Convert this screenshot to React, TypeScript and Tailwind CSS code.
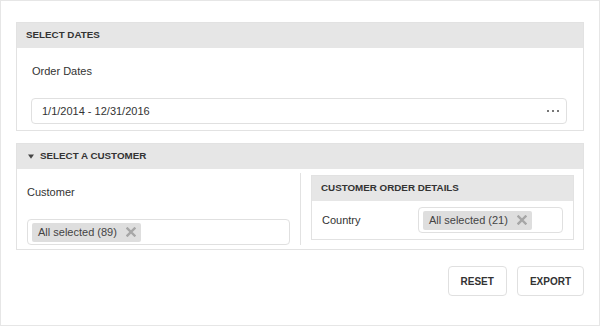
import React from "react";

const font = { fontFamily: '"Liberation Sans", Arial, sans-serif' };

const RemoveIcon = () => (
   <svg width="10" height="10" viewBox="0 0 10 10" className="shrink-0">
      <path d="M1.5 1.5 L8.5 8.5 M8.5 1.5 L1.5 8.5" stroke="#a6a6a6" strokeWidth="2.4" strokeLinecap="square" />
   </svg>
);

const Tag = ({ label }: { label: string }) => (
   <span className="flex h-[19px] items-center rounded-[2px] bg-[#dedede] pl-[6px] pr-[5px] text-[11px] text-[#444]">
      <span>{label}</span>
      <span className="ml-[9px]">
         <RemoveIcon />
      </span>
   </span>
);

const PanelHeader = ({ title, collapsible }: { title: string; collapsible?: boolean }) => (
   <div
      className={`flex h-[25px] items-center bg-[#e6e6e6] text-[9.8px] font-bold uppercase text-[#333] ${
         collapsible ? "pl-[11px]" : "pl-[9px]"
      }`}
   >
      {collapsible && (
         <svg width="6" height="5" viewBox="0 0 6 5" className="mr-[6px]">
            <path d="M0 0.5 L6 0.5 L3 4.8 Z" fill="#444" />
         </svg>
      )}
      {title}
   </div>
);

export default function App() {
   return (
      <div
         className="h-[326px] w-[600px] border border-[#e6e6e6] bg-white px-[15px] pt-[21px]"
         style={font}
      >
         {/* Select dates */}
         <div className="border border-[#e2e2e2]">
            <PanelHeader title="Select Dates" />
            <div className="pb-[6px] pl-[14px] pr-[16px] pt-[16px]">
               <div className="pl-[1px] text-[11px] leading-[14px] text-[#333]">Order Dates</div>
               <div className="mt-[20px] flex h-[26px] items-center justify-between rounded-[4px] border border-[#e0e0e0] pl-[10px] pr-[7px] text-[11px] text-[#333]">
                  <span>1/1/2014 - 12/31/2016</span>
                  <span className="flex gap-[3px]">
                     <span className="h-[2px] w-[2px] bg-[#777]" />
                     <span className="h-[2px] w-[2px] bg-[#777]" />
                     <span className="h-[2px] w-[2px] bg-[#777]" />
                  </span>
               </div>
            </div>
         </div>

         {/* Select a customer */}
         <div className="mt-[12px] border border-[#e2e2e2]">
            <PanelHeader title="Select a Customer" collapsible />
            <div className="flex py-[4px]">
               <div className="w-[284px] border-r border-[#e2e2e2] pl-[10px] pr-[10px] pt-[12px]">
                  <div className="text-[11px] leading-[14px] text-[#333]">Customer</div>
                  <div className="mt-[20px] flex h-[26px] items-center rounded-[4px] border border-[#e0e0e0] pl-[4px]">
                     <Tag label="All selected (89)" />
                  </div>
               </div>
               <div className="flex-1 pl-[10px] pr-[9px] pt-[2px]">
                  <div className="border border-[#e2e2e2]">
                     <PanelHeader title="Customer Order Details" />
                     <div className="flex items-center px-[10px] py-[6px]">
                        <div className="w-[96px] text-[11px] text-[#333]">Country</div>
                        <div className="flex h-[26px] flex-1 items-center rounded-[4px] border border-[#e0e0e0] pl-[4px]">
                           <Tag label="All selected (21)" />
                        </div>
                     </div>
                  </div>
               </div>
            </div>
         </div>

         {/* Actions */}
         <div className="mt-[16px] flex justify-end gap-[10px]">
            <button className="h-[30px] rounded-[4px] border border-[#e0e0e0] bg-white px-[12px] text-[10px] font-bold text-[#333]">
               RESET
            </button>
            <button className="h-[30px] rounded-[4px] border border-[#e0e0e0] bg-white px-[12px] text-[10px] font-bold text-[#333]">
               EXPORT
            </button>
         </div>
      </div>
   );
}
